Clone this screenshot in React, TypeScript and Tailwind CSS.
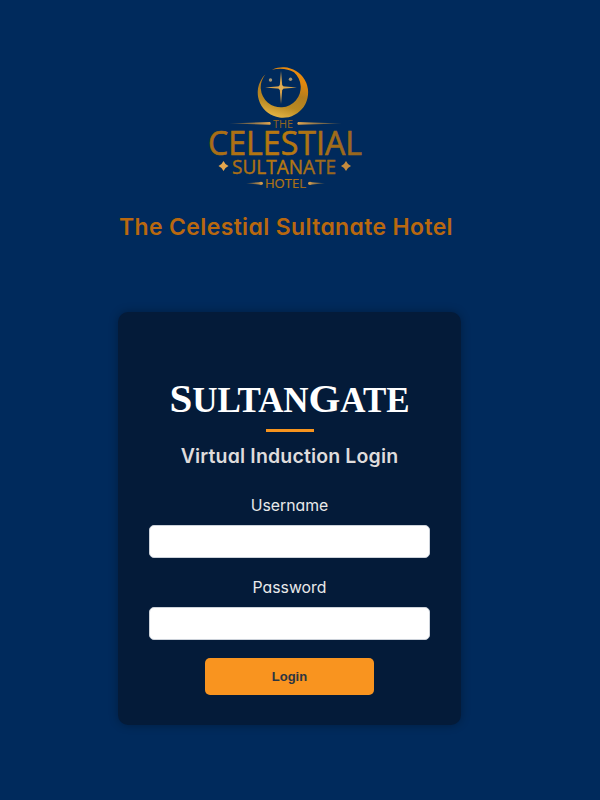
import React from 'react';

const gothic = "font-['Inter','Open_Sans',sans-serif] [font-feature-settings:'cv11'] whitespace-nowrap";

function Logo() {
  return (
    <svg width="170" height="135" viewBox="0 0 170 135" className="block" fontFamily="'Open Sans', 'Noto Sans', sans-serif">
      <defs>
        <linearGradient id="moon" x1="0.7" y1="0" x2="0.4" y2="1">
          <stop offset="0" stopColor="#ef8c0c" />
          <stop offset="0.25" stopColor="#df870e" />
          <stop offset="0.5" stopColor="#b27d1e" />
          <stop offset="0.75" stopColor="#b98922" />
          <stop offset="1" stopColor="#e5b545" />
        </linearGradient>
        <linearGradient id="letters" x1="0" y1="0" x2="1" y2="0">
          <stop offset="0" stopColor="#a76d16" />
          <stop offset="0.5" stopColor="#b9790f" />
          <stop offset="1" stopColor="#94651f" />
        </linearGradient>
        <linearGradient id="fadeLeft" x1="0" y1="0" x2="1" y2="0">
          <stop offset="0" stopColor="#b98535" stopOpacity="0.3" />
          <stop offset="1" stopColor="#e3a64e" />
        </linearGradient>
        <linearGradient id="fadeRight" x1="1" y1="0" x2="0" y2="0">
          <stop offset="0" stopColor="#b98535" stopOpacity="0.3" />
          <stop offset="1" stopColor="#e3a64e" />
        </linearGradient>
      </defs>
      <path d="M73 9A25.2 25.2 0 1 1 66.5 13.5A20 20 0 1 0 95 11.5C89 7.5 80 7 73 9Z" transform="translate(-1 0.8)" fill="url(#moon)" />
      <path d="M81 11L82.3 26.2L97 27.5L82.3 28.8L81 44L79.7 28.8L65 27.5L79.7 26.2Z" fill="#d9a44b" />
      <circle cx="81" cy="27.5" r="2.5" fill="#e2ae53" />
      <circle cx="70.5" cy="20" r="1.7" fill="#a49473" />
      <circle cx="90.5" cy="19.3" r="1.7" fill="#a49473" />
      <path d="M29 63.4L70 62Q71.5 63.4 70 64.8Z" fill="url(#fadeLeft)" />
      <path d="M142 63.4L98 62Q96.5 63.4 98 64.8Z" fill="url(#fadeRight)" />
      <text x="73" y="68" fontSize="10.8" textLength="20" lengthAdjust="spacingAndGlyphs" fill="#94651f">THE</text>
      <text x="8" y="94.5" fontSize="32" fontWeight="500" textLength="154" lengthAdjust="spacingAndGlyphs" fill="url(#letters)" stroke="url(#letters)" strokeWidth="0.6">CELESTIAL</text>
      <text x="32" y="113.8" fontSize="20" fontWeight="500" textLength="104" lengthAdjust="spacingAndGlyphs" fill="url(#letters)" stroke="url(#letters)" strokeWidth="0.4">SULTANATE</text>
      <path d="M23.5 101L25.5 104L28.5 106L25.5 108L23.5 111L21.5 108L18.5 106L21.5 104Z" fill="#e3a64e" />
      <path d="M146 101L148 104L151 106L148 108L146 111L144 108L141 106L144 104Z" fill="#c58b3e" />
      <path d="M46 123.3L59 122.2L61 121.7Q63 121.7 63 123.3Q63 124.9 61 124.9L59 124.4Z" fill="url(#fadeLeft)" />
      <path d="M125 123.3L112 122.2L110 121.7Q108 121.7 108 123.3Q108 124.9 110 124.9L112 124.4Z" fill="url(#fadeRight)" />
      <text x="65" y="128" fontSize="12.3" fontWeight="500" textLength="41" lengthAdjust="spacingAndGlyphs" fill="url(#letters)" stroke="url(#letters)" strokeWidth="0.2">HOTEL</text>
    </svg>
  );
}

function Field({ label, type, name }: { label: string; type: string; name: string }) {
  return (
    <label className="flex flex-col items-center">
      <span className={`${gothic} text-[15.8px] leading-6 text-[#e9e9ea]`}>{label}</span>
      <input
        type={type}
        name={name}
        className="mt-[7px] block h-[33px] w-[281px] rounded-[5px] border border-[#ccd2da] bg-white px-2 outline-none"
      />
    </label>
  );
}

export default function App() {
  return (
    <main className="flex h-[800px] w-[600px] flex-col overflow-hidden bg-[#002a5c]">
      <header className="flex w-[572px] flex-col items-center pt-[60px]">
        <div className="h-[135px] w-[172px]">
          <Logo />
        </div>
        <h1 className={`${gothic} mt-4 text-[23px] leading-8 font-semibold tracking-[0.35px] text-[#b9680f]`}>
          The Celestial Sultanate Hotel
        </h1>
      </header>
      <section className="mt-[69px] ml-[118px] flex h-[413px] w-[343px] flex-col items-center rounded-[10px] bg-[#041b39] pt-[64px] shadow-[0_0_10px_rgba(0,0,0,0.3)]">
        <h2 className="flex items-baseline font-['Liberation_Serif',serif] text-[35px] leading-[44px] font-bold whitespace-nowrap text-white tracking-[-0.1px]">
          <span className="text-[41px]">S</span>
          <span>ULTAN</span>
          <span className="text-[41px]">G</span>
          <span>ATE</span>
        </h2>
        <div className="mt-[6px] h-[3px] w-12 bg-[#f7941e]" />
        <h3 className={`${gothic} mt-[10px] text-[19.5px] leading-7 font-semibold tracking-[0.15px] text-[#dfdcdc]`}>
          Virtual Induction Login
        </h3>
        <form className="mt-6 flex flex-col items-center" onSubmit={(e) => e.preventDefault()}>
          <Field label="Username" type="text" name="username" />
          <div className="h-[18px]" />
          <Field label="Password" type="password" name="password" />
          <button
            type="submit"
            className="mt-[18px] h-[37px] w-[169px] rounded-[5px] bg-[#f9941f] font-['Liberation_Sans',Arial,sans-serif] text-[13px] font-bold text-[#2c3542]"
          >
            Login
          </button>
        </form>
      </section>
    </main>
  );
}
